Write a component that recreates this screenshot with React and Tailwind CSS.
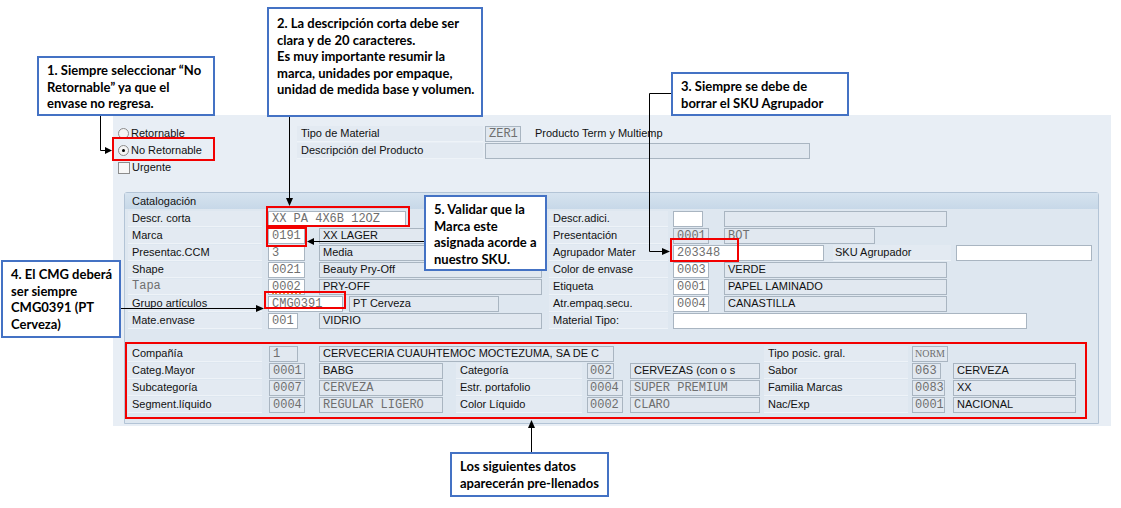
import React from "react";

const mono = "font-['Liberation_Mono',monospace] text-[12px] text-[#6f6f6f]";
const sans = "font-['Liberation_Sans',sans-serif] text-[11px] text-[#111]";

function Label({ children, w, dim }) {
  return (
    <div
      className={`${w} h-[16px] flex items-center pl-[4px] bg-[#e3eaf2] border-b border-[#eef3f8] whitespace-nowrap overflow-hidden ${
        dim ? mono : sans
      }`}
    >
      {children}
    </div>
  );
}

function Field({ w, ml, v, isMono = true, white, req, pad = "px-[3px]" }) {
  return (
    <div
      className={`${w} ${ml} ${pad} relative h-[16px] shrink-0 flex items-center border border-[#a9b5c1] whitespace-nowrap overflow-hidden ${
        white ? "bg-white" : "bg-[#e1e8f0]"
      } ${isMono ? mono : sans}`}
    >
      {v}
      {req ? (
        <span className="absolute left-[3px] right-[3px] bottom-[-1px] border-b-2 border-dotted border-[#f08a24]" />
      ) : null}
    </div>
  );
}

function Row({ children }) {
  return <div className="flex h-[17px] items-center">{children}</div>;
}

function Left({ children }) {
  return <div className="flex w-[421px] shrink-0 items-center">{children}</div>;
}

function Callout({ className, children }) {
  return (
    <div
      className={`absolute border-2 border-[#4472c4] bg-white pl-[8px] font-['Lato',sans-serif] font-bold text-[13px] leading-[16.5px] text-black whitespace-nowrap ${className}`}
    >
      {children}
    </div>
  );
}

function Radio({ checked, label }) {
  return (
    <div className="flex h-[17px] items-center gap-[2px]">
      <span className="flex h-[11px] w-[11px] items-center justify-center rounded-full border border-[#8c8c8c] bg-[#f4f4f4]">
        {checked ? <span className="h-[3px] w-[3px] rounded-full bg-black" /> : null}
      </span>
      <span className={sans}>{label}</span>
    </div>
  );
}

const catalog = [
  {
    l: "Descr. corta",
    left: <Field w="w-[138px]" ml="ml-[6px]" v="XX PA 4X6B 12OZ" white />,
    rl: "Descr.adici.",
    right: (
      <>
        <Field w="w-[30px]" ml="ml-[5px]" v="" white />
        <Field w="w-[223px]" ml="ml-[21px]" v="" />
      </>
    ),
  },
  {
    l: "Marca",
    left: (
      <>
        <Field w="w-[37px]" ml="ml-[6px]" v="0191" white />
        <Field w="w-[223px]" ml="ml-[14px]" v="XX LAGER" isMono={false} />
      </>
    ),
    rl: "Presentación",
    right: (
      <>
        <Field w="w-[36px]" ml="ml-[5px]" v="0001" />
        <Field w="w-[151px]" ml="ml-[15px]" v="BOT" />
      </>
    ),
  },
  {
    l: "Presentac.CCM",
    left: (
      <>
        <Field w="w-[37px]" ml="ml-[6px]" v="3" white />
        <Field w="w-[223px]" ml="ml-[14px]" v="Media" isMono={false} />
      </>
    ),
    rl: "Agrupador Mater",
    right: (
      <>
        <Field w="w-[151px]" ml="ml-[5px]" v="203348" white />
        <div className={`ml-[9px] w-[118px] h-[16px] flex items-center pl-[2px] bg-[#e3eaf2] border-b border-[#eef3f8] ${sans}`}>
          SKU Agrupador
        </div>
        <Field w="w-[136px]" ml="ml-[5px]" v="" white />
      </>
    ),
  },
  {
    l: "Shape",
    left: (
      <>
        <Field w="w-[37px]" ml="ml-[6px]" v="0021" white />
        <Field w="w-[223px]" ml="ml-[14px]" v="Beauty Pry-Off" isMono={false} />
      </>
    ),
    rl: "Color de envase",
    right: (
      <>
        <Field w="w-[36px]" ml="ml-[5px]" v="0003" white />
        <Field w="w-[223px]" ml="ml-[15px]" v="VERDE" isMono={false} />
      </>
    ),
  },
  {
    l: "Tapa",
    dim: true,
    left: (
      <>
        <Field w="w-[37px]" ml="ml-[6px]" v="0002" white req />
        <Field w="w-[223px]" ml="ml-[14px]" v="PRY-OFF" isMono={false} />
      </>
    ),
    rl: "Etiqueta",
    right: (
      <>
        <Field w="w-[36px]" ml="ml-[5px]" v="0001" white />
        <Field w="w-[223px]" ml="ml-[15px]" v="PAPEL LAMINADO" isMono={false} />
      </>
    ),
  },
  {
    l: "Grupo artículos",
    left: (
      <>
        <Field w="w-[75px]" ml="ml-[6px]" v="CMG0391" white />
        <Field w="w-[150px]" ml="ml-[6px]" v="PT Cerveza" isMono={false} />
      </>
    ),
    rl: "Atr.empaq.secu.",
    right: (
      <>
        <Field w="w-[36px]" ml="ml-[5px]" v="0004" white />
        <Field w="w-[223px]" ml="ml-[15px]" v="CANASTILLA" isMono={false} />
      </>
    ),
  },
  {
    l: "Mate.envase",
    left: (
      <>
        <Field w="w-[30px]" ml="ml-[6px]" v="001" white />
        <Field w="w-[223px]" ml="ml-[21px]" v="VIDRIO" isMono={false} />
      </>
    ),
    rl: "Material Tipo:",
    right: <Field w="w-[354px]" ml="ml-[5px]" v="" white />,
  },
];

const bottom = [
  ["Categ.Mayor", "0001", "BABG", false, "Categoría", "002", "CERVEZAS (con o s", false, "Sabor", "063", "CERVEZA"],
  ["Subcategoría", "0007", "CERVEZA", true, "Estr. portafolio", "0004", "SUPER PREMIUM", true, "Familia Marcas", "0083", "XX"],
  ["Segment.líquido", "0004", "REGULAR LIGERO", true, "Color Líquido", "0002", "CLARO", true, "Nac/Exp", "0001", "NACIONAL"],
];

function Arrows() {
  return (
    <svg className="pointer-events-none absolute inset-0" width="1121" height="508">
      <g stroke="#000" strokeWidth="1" fill="none">
        <path d="M100.5 116 V150.5 H106" />
        <path d="M289.5 117 V199" />
        <path d="M671 93.5 H649.5 V251.5 H663" />
        <path d="M424 241.5 H313" />
        <path d="M121 308.5 H257" />
        <path d="M531.5 452 V427" />
      </g>
      <g fill="#000">
        <path d="M112 150.5 L105 147 L105 154 Z" />
        <path d="M289.5 206 L286 198 L293 198 Z" />
        <path d="M670 251.5 L662 248 L662 255 Z" />
        <path d="M307 241.5 L314 238 L314 245 Z" />
        <path d="M264 308.5 L256 305 L256 312 Z" />
        <path d="M531.5 420 L528 428 L535 428 Z" />
      </g>
    </svg>
  );
}

export default function App() {
  return (
    <div className="relative h-[508px] w-[1121px] overflow-hidden bg-white">
      <div className="ml-[113px] mt-[115px] h-[311px] w-[998px] bg-[#e8eef5]">
        {/* cabecera */}
        <div className="flex h-[77px] pt-[10px]">
          <div className="w-[184px] pl-[5px]">
            <Radio label="Retornable" />
            <Radio checked label="No Retornable" />
            <div className="flex h-[17px] items-center gap-[2px]">
              <span className="h-[12px] w-[12px] border border-[#8c8c8c] bg-[#f7f7f7]" />
              <span className={sans}>Urgente</span>
            </div>
          </div>
          <div>
            <Row>
              <Label w="w-[186px]">Tipo de Material</Label>
              <Field w="w-[36px]" ml="ml-[2px]" v="ZER1" />
              <span className={`ml-[14px] ${sans}`}>Producto Term y Multiemp</span>
            </Row>
            <Row>
              <Label w="w-[186px]">Descripción del Producto</Label>
              <Field w="w-[325px]" ml="ml-[2px]" v="" />
            </Row>
          </div>
        </div>

        {/* catalogación */}
        <div className="ml-[11px] h-[232px] w-[975px] rounded-t-[3px] border border-[#b3c4d6] bg-[#dee7f0]">
          <div className={`flex h-[16px] items-center bg-gradient-to-b from-[#d6e3ef] to-[#c7d8e8] pl-[7px] ${sans}`}>
            Catalogación
          </div>
          <div className="pl-[3px] pt-[1px]">
            {catalog.map((r) => (
              <Row key={r.l}>
                <Left>
                  <Label w="w-[134px]" dim={r.dim}>
                    {r.l}
                  </Label>
                  {r.left}
                </Left>
                <Label w="w-[119px]">{r.rl}</Label>
                {r.right}
              </Row>
            ))}
          </div>

          <div className="mt-[16px] pl-[3px]">
            <Row>
              <Label w="w-[134px]">Compañía</Label>
              <Field w="w-[29px]" ml="ml-[7px]" v="1" />
              <Field w="w-[295px]" ml="ml-[21px]" v="CERVECERIA CUAUHTEMOC MOCTEZUMA, SA DE C" isMono={false} />
              <div className="ml-[150px]">
                <Label w="w-[144px]">Tipo posic. gral.</Label>
              </div>
              <Field
                w="w-[36px]"
                ml="ml-[4px]"
                pad="px-[2px]"
                v={<span className="font-['Liberation_Serif',serif] text-[10px]">NORM</span>}
              />
            </Row>
            {bottom.map((b) => (
              <Row key={b[0]}>
                <Label w="w-[134px]">{b[0]}</Label>
                <Field w="w-[36px]" ml="ml-[7px]" v={b[1]} />
                <Field w="w-[124px]" ml="ml-[14px]" v={b[2]} isMono={b[3]} />
                <div className="ml-[13px]">
                  <Label w="w-[126px]">{b[4]}</Label>
                </div>
                <Field
                  w={b[5].length === 3 ? "w-[27px]" : "w-[36px]"}
                  ml="ml-[5px]"
                  pad="px-[2px]"
                  v={b[5]}
                />
                <Field w="w-[130px]" ml={b[5].length === 3 ? "ml-[16px]" : "ml-[7px]"} v={b[6]} isMono={b[7]} />
                <div className="ml-[4px]">
                  <Label w="w-[144px]">{b[8]}</Label>
                </div>
                <Field
                  w={b[9].length === 3 ? "w-[29px]" : "w-[33px]"}
                  ml="ml-[4px]"
                  pad="px-[2px]"
                  v={b[9]}
                />
                <Field w="w-[123px]" ml={b[9].length === 3 ? "ml-[12px]" : "ml-[8px]"} v={b[10]} isMono={false} />
              </Row>
            ))}
          </div>
        </div>
      </div>

      {/* marcas rojas */}
      <div className="absolute left-[112px] top-[137px] h-[24px] w-[103px] border-2 border-[#f20000]" />
      <div className="absolute left-[266px] top-[206px] h-[21px] w-[144px] border-2 border-[#f20000]" />
      <div className="absolute left-[266px] top-[227px] h-[20px] w-[41px] border-2 border-[#f20000]" />
      <div className="absolute left-[264px] top-[291px] h-[18px] w-[82px] border-2 border-[#f20000]" />
      <div className="absolute left-[670px] top-[238px] h-[24px] w-[69px] border-2 border-[#f20000]" />
      <div className="absolute left-[125px] top-[342px] h-[77px] w-[962px] border-2 border-[#f20000]" />

      <Arrows />

      {/* notas */}
      <Callout className="left-[37px] top-[56px] h-[60px] w-[178px] pt-[4px]">
        1. Siempre seleccionar “No
        <br />
        Retornable” ya que el
        <br />
        envase no regresa.
      </Callout>
      <Callout className="left-[267px] top-[7px] h-[110px] w-[216px] pt-[6px]">
        2. La descripción corta debe ser
        <br />
        clara y de 20 caracteres.
        <br />
        Es muy importante resumir la
        <br />
        marca, unidades por empaque,
        <br />
        unidad de medida base y volumen.
      </Callout>
      <Callout className="left-[671px] top-[72px] h-[44px] w-[178px] pt-[4px]">
        3. Siempre se debe de
        <br />
        borrar el SKU Agrupador
      </Callout>
      <Callout className="left-[1px] top-[260px] h-[78px] w-[120px] pt-[4px]">
        4. El CMG deberá
        <br />
        ser siempre
        <br />
        CMG0391 (PT
        <br />
        Cerveza)
      </Callout>
      <Callout className="left-[424px] top-[195px] h-[76px] w-[123px] pt-[4px]">
        5. Validar que la
        <br />
        Marca este
        <br />
        asignada acorde a
        <br />
        nuestro SKU.
      </Callout>
      <Callout className="left-[450px] top-[452px] h-[45px] w-[159px] pt-[4px]">
        Los siguientes datos
        <br />
        aparecerán pre-llenados
      </Callout>
    </div>
  );
}
